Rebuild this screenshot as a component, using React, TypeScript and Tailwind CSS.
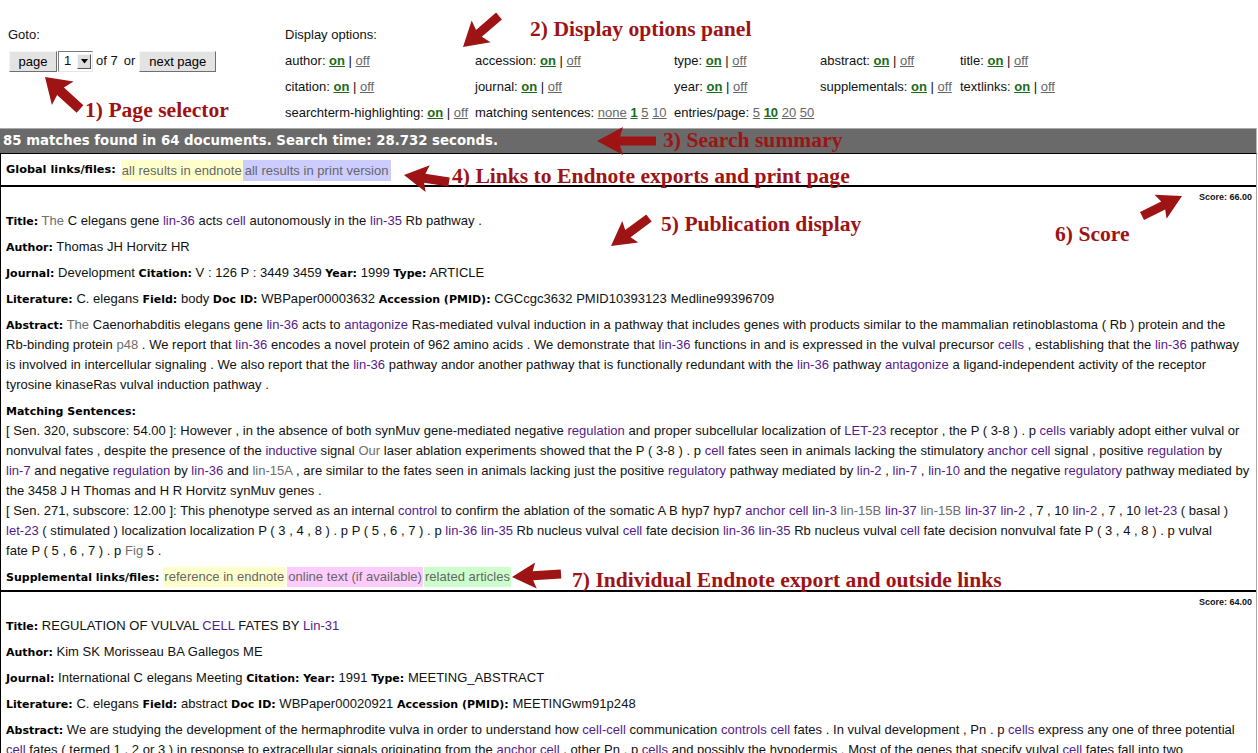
import React from "react";

const P = ({ children }: { children: React.ReactNode }) => (
  <span className="text-[#551a8b] whitespace-nowrap">{children}</span>
);
const G = ({ children }: { children: React.ReactNode }) => (
  <span className="text-[#6e6e6e] whitespace-nowrap">{children}</span>
);
const N = ({ children }: { children: React.ReactNode }) => (
  <span className="whitespace-nowrap">{children}</span>
);
const L = ({ children }: { children: React.ReactNode }) => (
  <b className="font-['DejaVu_Sans',sans-serif] text-[11px] leading-none tracking-normal font-bold text-black">{children}</b>
);

const On = () => <a className="font-bold text-[#1a6b1a] underline">on</a>;
const Off = () => <a className="text-[#666] underline">off</a>;
const Opt = ({ name }: { name: string }) => (
  <span className="whitespace-nowrap">
    {name}: <On /> | <Off />
  </span>
);

function arrowPts(tx: number, ty: number, px: number, py: number, shaft: number, headW: number, headL: number) {
  const dx = px - tx;
  const dy = py - ty;
  const len = Math.hypot(dx, dy);
  const ux = dx / len;
  const uy = dy / len;
  const nx = -uy;
  const ny = ux;
  const bx = px - ux * headL;
  const by = py - uy * headL;
  const pts = [
    [tx + (nx * shaft) / 2, ty + (ny * shaft) / 2],
    [bx + (nx * shaft) / 2, by + (ny * shaft) / 2],
    [bx - ux * 3 + (nx * headW) / 2, by - uy * 3 + (ny * headW) / 2],
    [px, py],
    [bx - ux * 3 - (nx * headW) / 2, by - uy * 3 - (ny * headW) / 2],
    [bx - (nx * shaft) / 2, by - (ny * shaft) / 2],
    [tx - (nx * shaft) / 2, ty - (ny * shaft) / 2],
  ];
  return pts.map((p) => p[0].toFixed(1) + "," + p[1].toFixed(1)).join(" ");
}

const arrows: number[][] = [
  [80, 109, 45, 77, 10, 32, 21],
  [499, 16, 463, 47, 9, 29, 21],
  [656, 141, 597, 141, 9, 28, 23],
  [449, 182, 404, 175, 9, 27, 21],
  [649, 218, 611, 246, 9, 27, 21],
  [1142, 216, 1182, 196, 9, 27, 21],
  [561, 574, 512, 577, 9, 26, 21],
];

const Btn = ({ children, w }: { children: React.ReactNode; w: string }) => (
  <button
    className={`${w} h-[21px] bg-[#e3e3e3] border border-t-[#f6f6f6] border-l-[#f6f6f6] border-b-[#6f6f6f] border-r-[#6f6f6f] text-[13px] leading-none text-black`}
  >
    {children}
  </button>
);

function Pub1() {
  return (
    <div className="border-b-2 border-black pl-[5px] pr-[2px] pt-[4px] pb-[3px]">
      <div className="text-right pr-[2px] font-['Liberation_Sans',sans-serif] text-[9px] tracking-normal font-bold leading-[12px] mb-[8px]">Score: 66.00</div>
      <div className="leading-[20px] mb-[6px]">
        <L>Title:</L> <G>The</G> C elegans gene <P>lin-36</P> acts <P>cell</P> autonomously in the <P>lin-35</P> Rb pathway .
      </div>
      <div className="leading-[20px] mb-[6px]">
        <L>Author:</L> Thomas JH Horvitz HR
      </div>
      <div className="leading-[20px] mb-[6px]">
        <L>Journal:</L> Development <L>Citation:</L> V : 126 P : 3449 3459 <L>Year:</L> 1999 <L>Type:</L> ARTICLE
      </div>
      <div className="leading-[20px] mb-[6px]">
        <L>Literature:</L> C. elegans <L>Field:</L> body <L>Doc ID:</L> WBPaper00003632 <L>Accession (PMID):</L> CGCcgc3632 PMID10393123 Medline99396709
      </div>
      <div className="leading-[20px] mb-[6px]">
        <L>Abstract:</L> <G>The</G> Caenorhabditis elegans gene <P>lin-36</P> acts to <P>antagonize</P> <N>Ras-mediated</N> vulval induction in a pathway that includes genes with products similar to the mammalian retinoblastoma ( Rb ) protein and the
        <br />
        <N>Rb-binding</N> protein <G>p48</G> . We report that <P>lin-36</P> encodes a novel protein of 962 amino acids . We demonstrate that <P>lin-36</P> functions in and is expressed in the vulval precursor <P>cells</P> , establishing that the <P>lin-36</P> pathway
        <br />
        is involved in intercellular signaling . We also report that the <P>lin-36</P> pathway andor another pathway that is functionally redundant with the <P>lin-36</P> pathway <P>antagonize</P> a <N>ligand-independent</N> activity of the receptor
        <br />
        tyrosine kinaseRas vulval induction pathway .
      </div>
      <div className="leading-[20px] mb-[6px]">
        <div>
          <L>Matching Sentences:</L>
        </div>
        <div>
          [ Sen. 320, subscore: 54.00 ]: However , in the absence of both synMuv <N>gene-mediated</N> negative <P>regulation</P> and proper subcellular localization of <P>LET-23</P> receptor , the P ( <N>3-8</N> ) . p <P>cells</P> variably adopt either vulval or
          <br />
          nonvulval fates , despite the presence of the <P>inductive</P> signal <G>Our</G> laser ablation experiments showed that the P ( <N>3-8</N> ) . p <P>cell</P> fates seen in animals lacking the stimulatory <P>anchor cell</P> signal , positive <P>regulation</P> by
          <br />
          <P>lin-7</P> and negative <P>regulation</P> by <P>lin-36</P> and <G>lin-15A</G> , are similar to the fates seen in animals lacking just the positive <P>regulatory</P> pathway mediated by <P>lin-2</P> , <P>lin-7</P> , <P>lin-10</P> and the negative <P>regulatory</P> pathway mediated by
          <br />
          the 3458 J H Thomas and H R Horvitz synMuv genes .
        </div>
        <div>
          [ Sen. 271, subscore: 12.00 ]: This phenotype served as an internal <P>control</P> to confirm the ablation of the somatic A B hyp7 hyp7 <P>anchor cell</P> <P>lin-3</P> <G>lin-15B</G> <P>lin-37</P> <G>lin-15B</G> <P>lin-37</P> <P>lin-2</P> , 7 , 10 <P>lin-2</P> , 7 , 10 <P>let-23</P> ( basal )
          <br />
          <P>let-23</P> ( stimulated ) localization localization P ( 3 , 4 , 8 ) . p P ( 5 , 6 , 7 ) . p <P>lin-36</P> <P>lin-35</P> Rb nucleus vulval <P>cell</P> fate decision <P>lin-36</P> <P>lin-35</P> Rb nucleus vulval <P>cell</P> fate decision nonvulval fate P ( 3 , 4 , 8 ) . p vulval
          <br />
          fate P ( 5 , 6 , 7 ) . p <G>Fig</G> 5 .
        </div>
      </div>
      <div className="leading-[20px] flex items-center">
        <L>Supplemental links/files:</L>
        <span className="ml-[4px] bg-[#ffffcc] text-[#666] px-[1px] leading-[20px]">reference in endnote</span>
        <span className="ml-[2px] bg-[#ffccff] text-[#666] px-[1px] leading-[20px]">online text (if available)</span>
        <span className="ml-[1px] bg-[#ccffcc] text-[#666] px-[1px] leading-[20px]">related articles</span>
      </div>
    </div>
  );
}

function Pub2() {
  return (
    <div className="border-b-2 border-black pl-[5px] pr-[2px] pt-[4px] pb-[3px]">
      <div className="text-right pr-[2px] font-['Liberation_Sans',sans-serif] text-[9px] tracking-normal font-bold leading-[12px] mb-[8px]">Score: 64.00</div>
      <div className="leading-[20px] mb-[6px]">
        <L>Title:</L> REGULATION OF VULVAL <P>CELL</P> FATES BY <P>Lin-31</P>
      </div>
      <div className="leading-[20px] mb-[6px]">
        <L>Author:</L> Kim SK Morisseau BA Gallegos ME
      </div>
      <div className="leading-[20px] mb-[6px]">
        <L>Journal:</L> International C elegans Meeting <L>Citation:</L> <L>Year:</L> 1991 <L>Type:</L> MEETING_ABSTRACT
      </div>
      <div className="leading-[20px] mb-[6px]">
        <L>Literature:</L> C. elegans <L>Field:</L> abstract <L>Doc ID:</L> WBPaper00020921 <L>Accession (PMID):</L> MEETINGwm91p248
      </div>
      <div className="leading-[20px] mb-[6px]">
        <L>Abstract:</L> We are studying the development of the hermaphrodite vulva in order to understand how <P>cell-cell</P> communication <P>controls</P> <P>cell</P> fates . In vulval development , Pn . p <P>cells</P> express any one of three potential
        <br />
        <P>cell</P> fates ( termed 1 , 2 or 3 ) in response to extracellular signals originating from the <P>anchor cell</P> , other Pn . p <P>cells</P> and possibly the hypodermis . Most of the genes that specify vulval <P>cell</P> fates fall into two
        <br />
        classes .
      </div>
    </div>
  );
}

export default function App() {
  return (
    <div className="relative w-[1258px] min-h-[753px] overflow-hidden bg-white text-[#111] font-['Liberation_Sans',Arial,sans-serif] text-[13px]">
      {/* top */}
      <div className="flex h-[128px] pt-[22px]">
        <div className="w-[285px] pl-[8px]">
          <div className="leading-[26px]">Goto:</div>
          <div className="h-[26px] flex items-center pl-[1px]">
            <Btn w="w-[48px]">page</Btn>
            <span className="ml-[1px] w-[35px] h-[21px] flex items-center justify-between bg-white border border-t-[#7a7a7a] border-l-[#7a7a7a] border-b-[#e6e6e6] border-r-[#e6e6e6] pl-[5px] pr-[1px]">
              <span>1</span>
              <span className="w-[14px] h-[15px] flex items-center justify-center bg-[#dedede] border border-t-[#f5f5f5] border-l-[#f5f5f5] border-b-[#555] border-r-[#555]">
                <svg width="7" height="5" viewBox="0 0 7 5">
                  <path d="M0 0 H7 L3.5 4.5 Z" fill="#000" />
                </svg>
              </span>
            </span>
            <span className="ml-[3px]">of 7</span>
            <span className="ml-[6px]">or</span>
            <span className="ml-[4px]">
              <Btn w="w-[77px]">next page</Btn>
            </span>
          </div>
        </div>
        <div className="grid grid-cols-[190px_199px_146px_140px_auto] auto-rows-[26px] items-center leading-[26px] content-start">
          <div className="col-span-5">Display options:</div>
          <Opt name="author" />
          <Opt name="accession" />
          <Opt name="type" />
          <Opt name="abstract" />
          <Opt name="title" />
          <Opt name="citation" />
          <Opt name="journal" />
          <Opt name="year" />
          <Opt name="supplementals" />
          <Opt name="textlinks" />
          <Opt name="searchterm-highlighting" />
          <span className="whitespace-nowrap">
            matching sentences: <a className="text-[#666] underline">none</a> <a className="font-bold text-[#1a6b1a] underline">1</a> <a className="text-[#666] underline">5</a> <a className="text-[#666] underline">10</a>
          </span>
          <span className="whitespace-nowrap col-span-3">
            entries/page: <a className="text-[#666] underline">5</a> <a className="font-bold text-[#1a6b1a] underline">10</a> <a className="text-[#666] underline">20</a> <a className="text-[#666] underline">50</a>
          </span>
        </div>
      </div>

      {/* summary bar */}
      <div className="w-[1257px] h-[26px] border-t border-t-[#a9a9a9] border-b border-b-black border-r border-r-[#bbb] bg-[#6a6a6a] text-white font-['DejaVu_Sans',sans-serif] font-bold text-[13.3px] leading-[24px] pl-[3px]">
        85 matches found in 64 documents. Search time: 28.732 seconds.
      </div>

      <div className="w-[1257px] border-l border-l-black border-r border-r-[#aaa] tracking-[0.03px]">
        <div className="h-[33px] border-b-2 border-black flex items-center pl-[5px] pt-[1px]">
          <b className="font-['DejaVu_Sans',sans-serif] text-[11.3px] leading-none tracking-normal font-bold text-black">Global links/files:</b>
          <span className="ml-[5px] bg-[#ffffcc] text-[#666] px-[1px] leading-[21px]">all results in endnote</span>
          <span className="bg-[#ccccff] text-[#666] px-[2px] leading-[21px]">all results in print version</span>
        </div>
        <Pub1 />
        <Pub2 />
      </div>

      {/* annotations overlay */}
      <svg className="absolute left-0 top-0 pointer-events-none" width="1258" height="753">
        {arrows.map((a, i) => (
          <polygon key={i} points={arrowPts(a[0], a[1], a[2], a[3], a[4], a[5], a[6])} fill="#9e1414" />
        ))}
      </svg>
      <div className="absolute left-[85px] top-[98px] whitespace-nowrap font-['Liberation_Serif',serif] font-bold text-[21.6px] leading-[24px] text-[#9e1414] pointer-events-none">1) Page selector</div>
      <div className="absolute left-[530px] top-[17px] whitespace-nowrap font-['Liberation_Serif',serif] font-bold text-[21.6px] leading-[24px] text-[#9e1414] pointer-events-none">2) Display options panel</div>
      <div className="absolute left-[663px] top-[128px] whitespace-nowrap font-['Liberation_Serif',serif] font-bold text-[21.6px] leading-[24px] text-[#9e1414] pointer-events-none">3) Search summary</div>
      <div className="absolute left-[452px] top-[164px] whitespace-nowrap font-['Liberation_Serif',serif] font-bold text-[21.6px] leading-[24px] text-[#9e1414] pointer-events-none">4) Links to Endnote exports and print page</div>
      <div className="absolute left-[661px] top-[212px] whitespace-nowrap font-['Liberation_Serif',serif] font-bold text-[21.6px] leading-[24px] text-[#9e1414] pointer-events-none">5) Publication display</div>
      <div className="absolute left-[1055px] top-[222px] whitespace-nowrap font-['Liberation_Serif',serif] font-bold text-[21.6px] leading-[24px] text-[#9e1414] pointer-events-none">6) Score</div>
      <div className="absolute left-[572px] top-[568px] whitespace-nowrap font-['Liberation_Serif',serif] font-bold text-[21.6px] leading-[24px] text-[#9e1414] pointer-events-none">7) Individual Endnote export and outside links</div>
    </div>
  );
}
